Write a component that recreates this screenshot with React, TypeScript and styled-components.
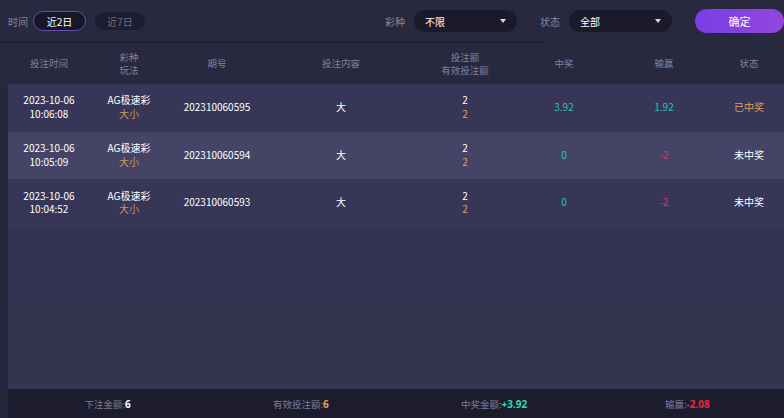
import React from "react";
import styled, { createGlobalStyle } from "styled-components";

const Global = createGlobalStyle`
  html, body { margin: 0; padding: 0; background: #27273e; }
  body { font-family: "Noto Sans CJK SC", "Noto Sans", sans-serif; font-size: 10px; color: #fff; }
  * { box-sizing: border-box; }
`;

const Page = styled.div`
  width: 784px;
  height: 418px;
  display: flex;
  flex-direction: column;
  background: #28283f;
  overflow: hidden;
`;

const TopBar = styled.div`
  position: relative;
  height: 44px;
  flex: none;
  display: flex;
  align-items: center;
  padding: 0 0 2px 8px;
  white-space: nowrap;
  &::after {
    content: "";
    position: absolute;
    left: 0;
    bottom: 1px;
    width: 544px;
    height: 1px;
    background: #1c1c2d;
  }
`;

const Label = styled.span<{ $gap?: number }>`
  flex: none;
  width: 20px;
  color: #8585a2;
  font-size: 10px;
  margin-right: ${(p) => p.$gap ?? 5}px;
`;

const Pill = styled.div<{ $active?: boolean }>`
  flex: none;
  width: ${(p) => (p.$active ? 53 : 50)}px;
  height: ${(p) => (p.$active ? 20 : 18)}px;
  border-radius: 10px;
  display: flex;
  align-items: center;
  justify-content: center;
  font-size: 10px;
  background: ${(p) => (p.$active ? "#17172a" : "#1d1d30")};
  border: ${(p) => (p.$active ? "1px solid #6b4ab0" : "none")};
  color: ${(p) => (p.$active ? "#ffffff" : "#6f6f8c")};
  margin-right: 9px;
`;

const Spacer = styled.div<{ $w: number }>`
  width: ${(p) => p.$w}px;
  flex: none;
`;

const Select = styled.div`
  flex: none;
  width: 103px;
  height: 22px;
  border-radius: 11px;
  background: #1a1a2b;
  display: flex;
  align-items: center;
  justify-content: space-between;
  padding: 0 11px 0 11px;
  color: #fff;
  font-size: 10px;
  margin-right: 23px;
`;

const Caret = styled.span`
  width: 0;
  height: 0;
  border-left: 3px solid transparent;
  border-right: 3px solid transparent;
  border-top: 4px solid #d8d8e4;
`;

const Confirm = styled.button`
  flex: none;
  width: 89px;
  height: 24px;
  border: none;
  border-radius: 12px;
  background: linear-gradient(90deg, #7a3de6, #9147de);
  color: #fff;
  font-family: inherit;
  font-size: 11px;
  padding: 0;
  cursor: pointer;
`;

const Main = styled.div`
  flex: 1;
  display: flex;
  flex-direction: column;
  padding-left: 8px;
  min-height: 0;
  background: #26263d;
`;

const Grid = styled.div`
  display: grid;
  grid-template-columns: 82px 78px 98px 150px 98px 100px 100px 70px;
  align-items: center;
`;

const HeaderRow = styled(Grid)`
  height: 40px;
  flex: none;
  font-size: 9.5px;
  background: #28283f;
  margin-left: -8px;
  padding-left: 8px;
`;

const Cell = styled.div<{ $color?: string }>`
  text-align: center;
  line-height: 13.5px;
  white-space: nowrap;
  color: ${(p) => p.$color ?? "#ffffff"};
`;

const Sub = styled.div<{ $color: string }>`
  color: ${(p) => p.$color};
`;

const Body = styled.div`
  flex: 1;
  background: linear-gradient(180deg, #343352, #33324f);
  border-bottom: 5px solid #373655;
  display: flex;
  flex-direction: column;
`;

const Row = styled(Grid)<{ $alt?: boolean }>`
  height: 47.7px;
  padding-bottom: 2px;
  background: ${(p) => (p.$alt ? "#454467" : "#373657")};
  font-size: 10px;
`;

const Footer = styled.div`
  height: 29px;
  flex: none;
  background: #1d1c2d;
  display: grid;
  grid-template-columns: repeat(4, 1fr);
  align-items: center;
  font-size: 9.5px;
  padding-left: 3px;
`;

const FootItem = styled.div`
  text-align: center;
  color: #7c7c98;
`;

const FootVal = styled.b<{ $color: string }>`
  color: ${(p) => p.$color};
  font-weight: 700;
  font-size: 10px;
  font-family: "Noto Sans", "Noto Sans CJK SC", sans-serif;
`;

const HEAD = "#8080a0";
const TEAL = "#2cc2b2";
const ORANGE = "#e29f58";
const RED = "#d23a6a";

type Rec = {
  date: string;
  time: string;
  no: string;
  win: string;
  net: string;
  netColor: string;
  status: string;
  statusColor: string;
};

const records: Rec[] = [
  { date: "2023-10-06", time: "10:06:08", no: "202310060595", win: "3.92", net: "1.92", netColor: TEAL, status: "已中奖", statusColor: ORANGE },
  { date: "2023-10-06", time: "10:05:09", no: "202310060594", win: "0", net: "-2", netColor: RED, status: "未中奖", statusColor: "#ffffff" },
  { date: "2023-10-06", time: "10:04:52", no: "202310060593", win: "0", net: "-2", netColor: RED, status: "未中奖", statusColor: "#ffffff" },
];

export default function App() {
  return (
    <Page>
      <Global />
      <TopBar>
        <Label>时间</Label>
        <Pill $active>近2日</Pill>
        <Pill>近7日</Pill>
        <Spacer $w={231} />
        <Label $gap={9}>彩种</Label>
        <Select>
          <span>不限</span>
          <Caret />
        </Select>
        <Label $gap={9}>状态</Label>
        <Select>
          <span>全部</span>
          <Caret />
        </Select>
        <Confirm>确定</Confirm>
      </TopBar>
      <Main>
        <HeaderRow>
          <Cell $color={HEAD}>投注时间</Cell>
          <Cell $color={HEAD}>彩种<br />玩法</Cell>
          <Cell $color={HEAD}>期号</Cell>
          <Cell $color={HEAD}>投注内容</Cell>
          <Cell $color={HEAD}>投注额<br />有效投注额</Cell>
          <Cell $color={HEAD}>中奖</Cell>
          <Cell $color={HEAD}>输赢</Cell>
          <Cell $color={HEAD}>状态</Cell>
        </HeaderRow>
        <Body>
          {records.map((r, i) => (
            <Row key={r.no} $alt={i === 1}>
              <Cell>{r.date}<br />{r.time}</Cell>
              <Cell>AG极速彩<Sub $color="#c99a5c">大小</Sub></Cell>
              <Cell>{r.no}</Cell>
              <Cell>大</Cell>
              <Cell>2<Sub $color={ORANGE}>2</Sub></Cell>
              <Cell $color={TEAL}>{r.win}</Cell>
              <Cell $color={r.netColor}>{r.net}</Cell>
              <Cell $color={r.statusColor}>{r.status}</Cell>
            </Row>
          ))}
        </Body>
        <Footer>
          <FootItem>下注金额:<FootVal $color="#ffffff">6</FootVal></FootItem>
          <FootItem>有效投注额:<FootVal $color={ORANGE}>6</FootVal></FootItem>
          <FootItem>中奖金额:<FootVal $color="#2fd9b0">+3.92</FootVal></FootItem>
          <FootItem>输赢:<FootVal $color="#e8283e">-2.08</FootVal></FootItem>
        </Footer>
      </Main>
    </Page>
  );
}
